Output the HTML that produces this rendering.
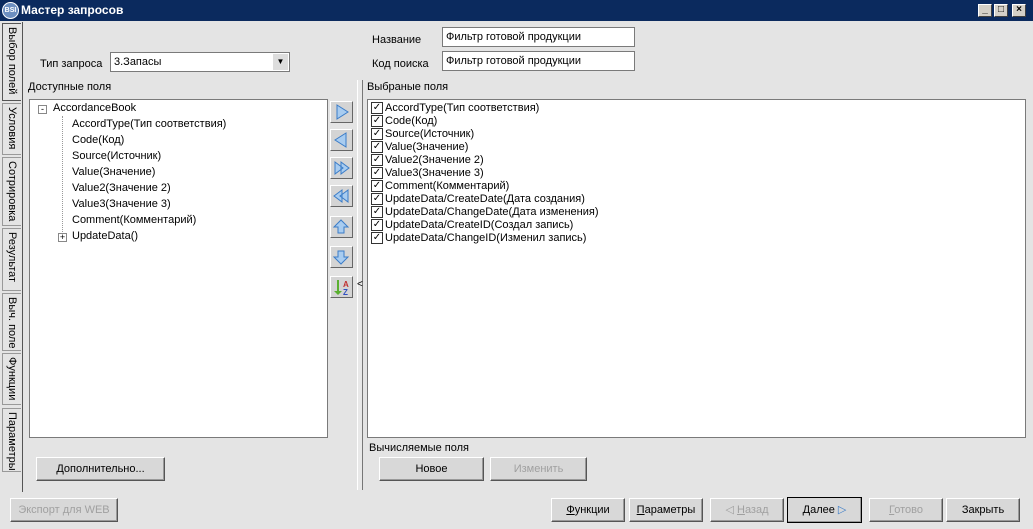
<!DOCTYPE html>
<html><head><meta charset="utf-8"><style>
*{margin:0;padding:0;box-sizing:border-box}
body{width:1033px;height:529px;overflow:hidden;background:#e4e4e4;font-family:"Liberation Sans",sans-serif;font-size:11px;color:#000;position:relative}
.a{position:absolute}
.title{left:0;top:0;width:1033px;height:21px;background:#0b2a5e;color:#fff;font-weight:bold;font-size:12px;line-height:21px;padding-left:21px}
.logo{left:2px;top:2px;width:17px;height:17px;border-radius:50%;background:#6d8fc0;border:1px solid #fff;color:#fff;font-size:7px;line-height:15px;text-align:center;font-weight:bold}
.wb{top:4px;width:14px;height:13px;background:#d4d0c8;border:1px solid;border-color:#fff #404040 #404040 #fff;color:#000;font-size:10px;line-height:10px;text-align:center;font-weight:bold}
.tab{left:2px;width:19px;border:1px solid #999;border-right:none;background:#e4e4e4}
.tab span{position:absolute;left:3px;top:3px;writing-mode:vertical-rl;white-space:nowrap;font-size:11px}
.inp{background:#fff;border:1px solid #7a7a7a;height:20px;line-height:18px;padding-left:3px}
.box{background:#fff;border:1px solid #7a7a7a}
.btn{background:#d8d8d8;border:1px solid;border-color:#fff #555 #555 #fff;box-shadow:inset -1px -1px 0 #999;text-align:center;line-height:22px;height:24px}
.dis{color:#a0a0a0}
.ib{left:330px;width:23px;height:22px;background:#d4d4d4;border:1px solid;border-color:#fff #666 #666 #fff}
.t{position:absolute;white-space:nowrap;line-height:15px}
.cb{position:absolute;left:3px;width:12px;height:12px;border:1px solid #333;background:#fff;font-size:10px;line-height:10px;text-align:center}
</style></head><body>
<div class="a title">Мастер запросов</div>
<div class="a logo">BSI</div>
<div class="a wb" style="left:978px">_</div>
<div class="a wb" style="left:994px">□</div>
<div class="a wb" style="left:1012px">×</div>
<div class="a" style="left:22px;top:22px;width:1px;height:470px;background:#555"></div>
<div class="a tab" style="top:23px;height:78px;background:#e4e4e4;border-color:#555"><span>Выбор полей</span></div>
<div class="a tab" style="top:103px;height:52px"><span>Условия</span></div>
<div class="a tab" style="top:157px;height:69px"><span>Сотрировка</span></div>
<div class="a tab" style="top:228px;height:63px"><span>Результат</span></div>
<div class="a tab" style="top:293px;height:58px"><span>Выч. поле</span></div>
<div class="a tab" style="top:353px;height:52px"><span>Функции</span></div>
<div class="a tab" style="top:408px;height:64px"><span>Параметры</span></div>

<div class="t" style="left:40px;top:57px">Тип запроса</div>
<div class="a inp" style="left:110px;top:52px;width:180px">3.Запасы</div>
<div class="a" style="left:273px;top:54px;width:15px;height:16px;background:#ddd;text-align:center;font-size:8px;line-height:16px">▼</div>
<div class="t" style="left:372px;top:33px">Название</div>
<div class="a inp" style="left:442px;top:27px;width:193px">Фильтр готовой продукции</div>
<div class="t" style="left:372px;top:57px">Код поиска</div>
<div class="a inp" style="left:442px;top:51px;width:193px">Фильтр готовой продукции</div>
<div class="t" style="left:28px;top:80px">Доступные поля</div>
<div class="t" style="left:367px;top:80px">Выбраные поля</div>

<div class="a box" style="left:29px;top:99px;width:299px;height:339px">
 <div class="a" style="left:8px;top:5px;width:9px;height:9px;border:1px solid #888;background:#fff;font-size:9px;line-height:6px;text-align:center">-</div>
 <div class="t" style="left:23px;top:1px">AccordanceBook</div>
 <div class="a" style="left:32px;top:16px;height:120px;border-left:1px dotted #999"></div>
 <div class="t" style="left:42px;top:17px">AccordType(Тип соответствия)</div>
 <div class="t" style="left:42px;top:33px">Code(Код)</div>
 <div class="t" style="left:42px;top:49px">Source(Источник)</div>
 <div class="t" style="left:42px;top:65px">Value(Значение)</div>
 <div class="t" style="left:42px;top:81px">Value2(Значение 2)</div>
 <div class="t" style="left:42px;top:97px">Value3(Значение 3)</div>
 <div class="t" style="left:42px;top:113px">Comment(Комментарий)</div>
 <div class="a" style="left:28px;top:133px;width:9px;height:9px;border:1px solid #888;background:#fff;font-size:9px;line-height:7px;text-align:center">+</div>
 <div class="t" style="left:42px;top:129px">UpdateData()</div>
</div>

<div class="a ib" style="top:101px"><svg width="21" height="20"><path d="M6 3L17 10L6 17Z" fill="#a8ccf0" stroke="#3a7cc8"/></svg></div>
<div class="a ib" style="top:129px"><svg width="21" height="20"><path d="M15 3L4 10L15 17Z" fill="#a8ccf0" stroke="#3a7cc8"/></svg></div>
<div class="a ib" style="top:157px"><svg width="21" height="20"><path d="M4 4L12 10L4 16ZM10 4L18 10L10 16Z" fill="#a8ccf0" stroke="#3a7cc8"/></svg></div>
<div class="a ib" style="top:185px"><svg width="21" height="20"><path d="M17 4L9 10L17 16ZM11 4L3 10L11 16Z" fill="#a8ccf0" stroke="#3a7cc8"/></svg></div>
<div class="a ib" style="top:216px"><svg width="21" height="20"><path d="M10 3L17 10H13V16H7V10H3Z" fill="#a8ccf0" stroke="#3a7cc8"/></svg></div>
<div class="a ib" style="top:246px"><svg width="21" height="20"><path d="M10 17L17 10H13V4H7V10H3Z" fill="#a8ccf0" stroke="#3a7cc8"/></svg></div>
<div class="a ib" style="top:276px"><svg width="21" height="20"><path d="M6 3V14H3L7 18L11 14H8V3Z" fill="#5ab030"/><text x="12" y="10" font-size="8" fill="#c03030" font-weight="bold">A</text><text x="12" y="18" font-size="8" fill="#3050c0" font-weight="bold">Z</text></svg></div>

<div class="a" style="left:357px;top:80px;width:6px;height:410px;background:#e8e8e8;border-left:1px solid #fff;border-right:1px solid #777"></div>
<div class="t" style="left:357px;top:277px;font-size:10px">&lt;</div>

<div class="a box" style="left:367px;top:99px;width:659px;height:339px">
 <div class="cb" style="top:2px">✓</div><div class="t" style="left:17px;top:1px">AccordType(Тип соответствия)</div>
 <div class="cb" style="top:15px">✓</div><div class="t" style="left:17px;top:14px">Code(Код)</div>
 <div class="cb" style="top:28px">✓</div><div class="t" style="left:17px;top:27px">Source(Источник)</div>
 <div class="cb" style="top:41px">✓</div><div class="t" style="left:17px;top:40px">Value(Значение)</div>
 <div class="cb" style="top:54px">✓</div><div class="t" style="left:17px;top:53px">Value2(Значение 2)</div>
 <div class="cb" style="top:67px">✓</div><div class="t" style="left:17px;top:66px">Value3(Значение 3)</div>
 <div class="cb" style="top:80px">✓</div><div class="t" style="left:17px;top:79px">Comment(Комментарий)</div>
 <div class="cb" style="top:93px">✓</div><div class="t" style="left:17px;top:92px">UpdateData/CreateDate(Дата создания)</div>
 <div class="cb" style="top:106px">✓</div><div class="t" style="left:17px;top:105px">UpdateData/ChangeDate(Дата изменения)</div>
 <div class="cb" style="top:119px">✓</div><div class="t" style="left:17px;top:118px">UpdateData/CreateID(Создал запись)</div>
 <div class="cb" style="top:132px">✓</div><div class="t" style="left:17px;top:131px">UpdateData/ChangeID(Изменил запись)</div>
</div>

<div class="t" style="left:369px;top:441px">Вычисляемые поля</div>
<div class="a btn" style="left:379px;top:457px;width:105px">Новое</div>
<div class="a btn dis" style="left:490px;top:457px;width:97px">Изменить</div>
<div class="a btn" style="left:36px;top:457px;width:129px">Дополнительно...</div>

<div class="a btn dis" style="left:10px;top:498px;width:108px">Экспорт для WEB</div>
<div class="a btn" style="left:551px;top:498px;width:74px"><u>Ф</u>ункции</div>
<div class="a btn" style="left:629px;top:498px;width:74px"><u>П</u>араметры</div>
<div class="a btn dis" style="left:710px;top:498px;width:74px">◁ <u>Н</u>азад</div>
<div class="a btn" style="left:787px;top:497px;width:75px;height:26px;border:1px solid #000;line-height:24px"><u>Д</u>алее <span style="color:#3a7cc8">▷</span></div>
<div class="a btn dis" style="left:869px;top:498px;width:74px"><u>Г</u>отово</div>
<div class="a btn" style="left:946px;top:498px;width:74px">Закрыть</div>
</body></html>
